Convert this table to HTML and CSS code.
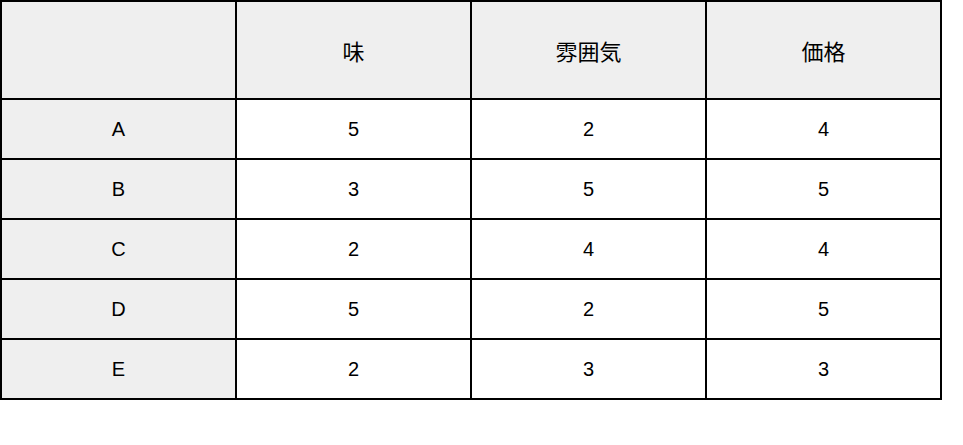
FILE: index.html
```html
<!DOCTYPE html>
<html lang="ja">
<head>
<meta charset="utf-8">
<link rel="stylesheet" href="styles.css">
</head>
<body>
<div class="table">
  <div class="cell head"></div>
  <div class="cell head jp">味</div>
  <div class="cell head jp">雰囲気</div>
  <div class="cell head jp">価格</div>

  <div class="cell label">A</div>
  <div class="cell">5</div>
  <div class="cell">2</div>
  <div class="cell">4</div>

  <div class="cell label">B</div>
  <div class="cell">3</div>
  <div class="cell">5</div>
  <div class="cell">5</div>

  <div class="cell label">C</div>
  <div class="cell">2</div>
  <div class="cell">4</div>
  <div class="cell">4</div>

  <div class="cell label">D</div>
  <div class="cell">5</div>
  <div class="cell">2</div>
  <div class="cell">5</div>

  <div class="cell label">E</div>
  <div class="cell">2</div>
  <div class="cell">3</div>
  <div class="cell">3</div>
</div>
</body>
</html>
```
FILE: styles.css
```css
html, body {
  margin: 0;
  padding: 0;
  background: #ffffff;
}

body {
  font-family: "Liberation Sans", Arial, "Noto Sans CJK JP", sans-serif;
  font-size: 20px;
  color: #000000;
}

.table {
  display: grid;
  grid-template-columns: repeat(4, 233px);
  grid-template-rows: 96px repeat(5, 58px);
  gap: 2px;
  padding: 2px;
  background: #000000;
  width: max-content;
}

.cell {
  display: flex;
  align-items: center;
  justify-content: center;
  background: #ffffff;
  line-height: 1;
}

.head,
.label {
  background: #efefef;
}

.jp {
  font-family: "Noto Sans CJK JP", sans-serif;
  font-size: 22px;
}
```
